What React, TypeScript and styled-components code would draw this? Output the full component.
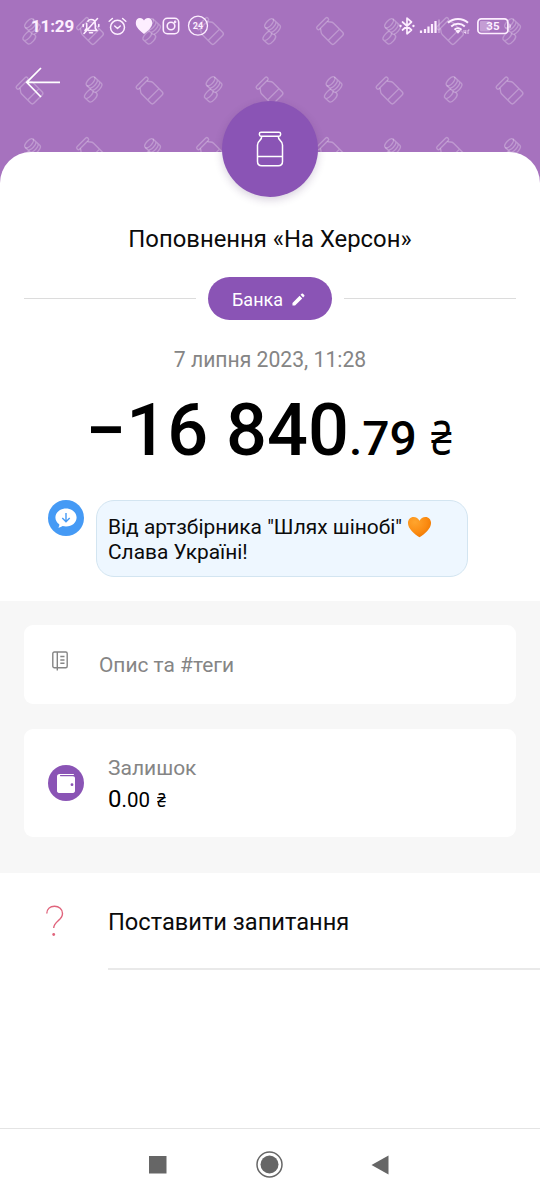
import React from "react";
import styled, { createGlobalStyle } from "styled-components";

const Global = createGlobalStyle`
  *, *::before, *::after { box-sizing: border-box; }
  body { margin: 0; background: #fff; font-family: Roboto, "Noto Sans", sans-serif; color: #0b0b0b; }
  svg { display: block; flex: none; }
`;

const violet = "#8a54b5";
const muted = "#858585";

const Screen = styled.div`
  width: 540px;
  height: 1200px;
  display: flex;
  flex-direction: column;
  background: #fff;
  overflow: hidden;
`;

const Header = styled.header`
  position: relative;
  flex: none;
  height: 190px;
  background: #a672be;
`;

const Backdrop = styled.svg`
  position: absolute;
  inset: 0;
`;

const StatusBar = styled.div`
  position: relative;
  display: flex;
  align-items: center;
  height: 52px;
  padding: 0 28px 0 31px;
  color: #fdeeff;
`;

const Clock = styled.span`
  width: 51px;
  font-size: 17px;
  font-weight: 700;
  line-height: 20px;
  letter-spacing: -0.15px;
`;

const Slot = styled.span<{ $gap?: number }>`
  margin-left: ${(p) => p.$gap ?? 0}px;
`;

const Spacer = styled.span`
  flex: 1;
`;

const BackButton = styled.button`
  position: relative;
  display: block;
  margin: 14px 0 0 25px;
  padding: 0;
  border: 0;
  background: none;
`;

const Sheet = styled.main`
  position: relative;
  flex: 1;
  display: flex;
  flex-direction: column;
  margin-top: -38px;
  border-radius: 31px 31px 0 0;
  background: #fff;
`;

const Avatar = styled.div`
  display: flex;
  align-items: center;
  justify-content: center;
  width: 96px;
  height: 96px;
  margin: -51px auto 0;
  border-radius: 50%;
  background: ${violet};
  box-shadow: 0 3px 8px rgba(60, 30, 90, 0.2);
`;

const Title = styled.h1`
  margin: 27px 0 0;
  font-size: 23.85px;
  font-weight: 400;
  line-height: 30px;
  text-align: center;
`;

const CategoryRow = styled.div`
  display: flex;
  align-items: center;
  gap: 12px;
  margin-top: 23px;
  padding: 0 24px;
`;

const Rule = styled.span`
  flex: 1;
  height: 1px;
  background: #dcdcdc;
`;

const Category = styled.button`
  display: flex;
  align-items: center;
  gap: 9px;
  width: 124px;
  height: 43px;
  padding: 1px 0 0 24px;
  border: 0;
  border-radius: 22px;
  background: ${violet};
  color: #fff;
  font: 400 18px Roboto, sans-serif;
`;

const DateLine = styled.p`
  margin: 27px 0 0;
  color: ${muted};
  font-size: 21.15px;
  line-height: 26px;
  text-align: center;
`;

const Amount = styled.p`
  display: flex;
  align-items: baseline;
  justify-content: center;
  margin: 16px 0 0;
  padding-left: 3px;
  color: #000;
  font-size: 72px;
  font-weight: 500;
  line-height: 84px;
  white-space: pre;
`;

const Cents = styled.span`
  font-size: 48px;
`;

const Currency = styled.span<{ $size: number; $gap: number }>`
  display: inline-block;
  margin-left: ${(p) => p.$gap}px;
  font-size: ${(p) => p.$size}px;
  font-weight: 400;
  transform: scaleX(0.78);
  transform-origin: left;
`;

const Message = styled.div`
  display: flex;
  align-items: flex-start;
  gap: 12px;
  margin-top: 19px;
  padding-left: 48px;
`;

const Bubble = styled.p`
  width: 372px;
  height: 77px;
  margin: 0;
  padding: 14px 11px 12px;
  border: 1px solid #d3e5f1;
  border-radius: 18px;
  background: #eef7ff;
  font-size: 20.9px;
  line-height: 25px;
`;

const Heart = styled.svg`
  display: inline-block;
  vertical-align: -4px;
`;

const Details = styled.section`
  display: flex;
  flex-direction: column;
  gap: 25px;
  height: 272px;
  margin-top: 24px;
  padding: 24px;
  background: #f7f7f7;
`;

const Card = styled.div<{ $height: number }>`
  display: flex;
  align-items: center;
  height: ${(p) => p.$height}px;
  padding-left: 24px;
  border-radius: 9px;
  background: #fff;
`;

const Hint = styled.span`
  margin: 1px 0 0 30px;
  color: ${muted};
  font-size: 20.9px;
`;

const NoteIcon = styled.svg`
  margin: 0 0 8px 4px;
`;

const Balance = styled.div`
  margin-left: 24px;
  padding-top: 2px;
  font-size: 21px;
  line-height: 31px;
`;

const BalanceLabel = styled.div`
  color: ${muted};
`;

const BalanceValue = styled.div`
  color: #000;
  font-size: 24px;
`;

const Small = styled.span`
  font-size: 20.5px;
`;

const Question = styled.div`
  display: flex;
  height: 97px;
  padding-left: 46px;
`;

const QuestionIcon = styled.svg`
  margin-top: 32px;
`;

const QuestionText = styled.div`
  flex: 1;
  margin-left: 44px;
  padding-top: 33px;
  border-bottom: 2px solid #e9e9e9;
  font-size: 23.65px;
  line-height: 32px;
`;

const NavBar = styled.nav`
  flex: none;
  display: flex;
  align-items: center;
  justify-content: space-between;
  height: 72px;
  padding: 0 151px 0 149px;
  border-top: 1px solid #e4e4e4;
`;

const Coins = () => (
  <g transform="rotate(-48) scale(0.95)">
    <ellipse cx="5" cy="-6.5" rx="6" ry="2.8" />
    <path d="M-1-6.5v9.8c0 1.6 2.7 2.8 6 2.8s6-1.2 6-2.8v-9.8M-1-3.2c0 1.6 2.7 2.8 6 2.8s6-1.2 6-2.8M-1 .1c0 1.6 2.7 2.8 6 2.8s6-1.2 6-2.8" />
    <path d="M-1-.8c-1.100-.7-3-1-5-1-3.300 0-6 1.200-6 2.800v5.500c0 1.600 2.700 2.800 6 2.800s6-1.200 6-2.800v-1.500M-12 1c0 1.600 2.700 2.800 6 2.800 2 0 4-.4 5-1.200" />
  </g>
);

const Jar = () => (
  <g transform="rotate(-45) scale(0.95)">
    <rect x="-8" y="-13.500" width="16" height="3.600" rx="1.500" />
    <path d="M-5.500-9.900c0 2.500-3 2.800-3 6V9.500c0 1.500 1 2.500 2.500 2.500H6c1.500 0 2.500-1 2.500-2.500V-3.900c0-3.200-3-3.500-3-6M-8.500 5h17" />
  </g>
);

const Pattern = () => (
  <Backdrop width="540" height="190" aria-hidden="true">
    <defs>
      <pattern id="savings" width="120" height="120" patternUnits="userSpaceOnUse">
        <g fill="none" stroke="#fff" strokeOpacity="0.27" strokeWidth="1.400">
          <g transform="translate(30.500 31)"><Coins /></g>
          <g transform="translate(90.500 31.500)"><Jar /></g>
          <g transform="translate(30 91)"><Jar /></g>
          <g transform="translate(92 89)"><Coins /></g>
        </g>
      </pattern>
    </defs>
    <rect width="540" height="190" fill="url(#savings)" />
  </Backdrop>
);

const line = { fill: "none", stroke: "currentColor", strokeLinecap: "round", strokeLinejoin: "round" } as const;

export default function App() {
  return (
    <Screen>
      <Global />
      <Header>
        <Pattern />
        <StatusBar>
          <Clock>11:29</Clock>
          <Slot>
            <svg width="18" height="18" viewBox="0 0 18 18" {...line} strokeWidth="1.600">
              <path d="M6 4.200C6.700 3 7.700 2.500 9 2.500c2.800 0 4.300 2 4.300 4.500v4.300l1.700 2.200H6.500M4.700 6.500v4.800L3 13.500M2 16.500 15.500 1.500M7.500 15.800h3M1.200 7.500v2M16.800 7.500v2" />
            </svg>
          </Slot>
          <Slot $gap={8}>
            <svg width="19" height="19" viewBox="0 0 19 19" {...line} strokeWidth="1.500">
              <circle cx="9.500" cy="10.300" r="7" />
              <path d="m6.700 9 2.800 2.500L12.300 9M1.200 4.200l3.200-2.700M17.800 4.200l-3.200-2.700" />
            </svg>
          </Slot>
          <Slot $gap={8}>
            <svg width="18" height="18" viewBox="0 0 18 18" fill="currentColor">
              <path d="M9 17C5 13.800.800 10.500.800 6c0-3 1.800-4.900 4.200-4.900 1.800 0 3.200.9 4 2.400.8-1.500 2.200-2.400 4-2.400 2.400 0 4.200 1.900 4.200 4.900 0 4.500-4.200 7.800-8.200 11z" />
            </svg>
          </Slot>
          <Slot $gap={9}>
            <svg width="18" height="18" viewBox="0 0 18 18" {...line} strokeWidth="1.600">
              <rect x="1.300" y="1.300" width="15.400" height="15.400" rx="4" />
              <circle cx="9" cy="9" r="3.800" />
              <circle cx="13.100" cy="4.900" r=".5" />
            </svg>
          </Slot>
          <Slot $gap={7}>
            <svg width="22" height="22" viewBox="0 0 22 22">
              <circle cx="11" cy="10.700" r="9.500" {...line} strokeWidth="1.300" />
              <text x="11" y="13.900" textAnchor="middle" fontSize="9" fontWeight="700" fill="currentColor">24</text>
            </svg>
          </Slot>
          <Spacer />
          <Slot>
            <svg width="16" height="18" viewBox="0 0 16 18" {...line} strokeWidth="1.700">
              <path d="m3.500 5 9 8L8 16.800V1.200L12.500 5l-9 8" />
              <path d="M1.500 9h.1M14.400 9h.1" strokeWidth="2.300" />
            </svg>
          </Slot>
          <Slot $gap={4}>
            <svg width="21" height="16" viewBox="0 0 21 16" fill="none" stroke="currentColor" strokeWidth="2.200">
              <path d="M2 15v-2.500M6 15v-4M9.500 15V8.500M13 15V6M16.500 15V3" />
              <path d="M20 15V1.500" opacity="0.300" />
            </svg>
          </Slot>
          <Slot $gap={7}>
            <svg width="23" height="18" viewBox="0 0 23 18" {...line} strokeWidth="2" strokeLinecap="butt">
              <path d="M1 5.800c5.500-5.100 14.500-5.100 20 0M4.200 9.500c3.900-3.600 9.700-3.600 13.600 0M7.500 12.700c2-1.900 5-1.900 7 0" />
              <path d="m8.300 13.800 2.700 3 2.700-3c-1.500-1.300-3.900-1.300-5.400 0z" fill="currentColor" stroke="none" />
              <path d="M17 13v2.500h2M18.800 13v4M21 17v-4h1.500" strokeWidth=".7" />
            </svg>
          </Slot>
          <Slot $gap={6}>
            <svg width="36" height="18" viewBox="0 0 36 18">
              <rect x="1.900" y="1.900" width="30" height="14.600" rx="3.500" {...line} strokeWidth="1.700" />
              <rect x="4" y="4" width="10" height="10.400" rx="1" fill="currentColor" opacity="0.350" />
              <path d="M33.500 6.500c1.500.3 1.500 5 0 5.300z" fill="currentColor" />
              <text x="17" y="13.300" textAnchor="middle" fontSize="11.500" fontWeight="700" letterSpacing=".2" fill="currentColor">35</text>
            </svg>
          </Slot>
        </StatusBar>
        <BackButton aria-label="Назад">
          <svg width="36" height="34" viewBox="0 0 36 34" fill="none" stroke="#fff" strokeWidth="1.700">
            <path d="M35 16.300H1.500M16 2 1.700 16.300 16 31" />
          </svg>
        </BackButton>
      </Header>

      <Sheet>
        <Avatar>
          <svg width="28" height="36" viewBox="0 0 28 36" fill="none" stroke="#fff" strokeWidth="1.500">
            <rect x="3.400" y="1.200" width="21.200" height="4" rx="1.600" />
            <path d="M5.700 5.200c.3 5-4.200 3.700-4.200 8.800v16.500c0 2.500 1.700 4.200 4.200 4.200h16.600c2.500 0 4.200-1.700 4.200-4.200V14c0-5.100-4.500-3.800-4.200-8.800M1.500 25.500h25" />
          </svg>
        </Avatar>
        <Title>Поповнення «На Херсон»</Title>
        <CategoryRow>
          <Rule />
          <Category>
            Банка
            <svg width="13" height="13" viewBox="0 0 14 14" fill="#fff">
              <path d="M.5 10.700 8.200 3l2.800 2.800-7.700 7.700H.5zM9.200 2l1.200-1.200c.4-.4 1-.4 1.400 0l1.400 1.400c.4.4.4 1 0 1.400L12 4.800z" />
            </svg>
          </Category>
          <Rule />
        </CategoryRow>
        <DateLine>7 липня 2023, 11:28</DateLine>
        <Amount>
          −16 840<Cents>.79</Cents><Currency $size={48} $gap={14}>₴</Currency>
        </Amount>
        <Message>
          <svg width="36" height="36" viewBox="0 0 36 36">
            <circle cx="18" cy="18" r="18" fill="#459af5" />
            <path d="M18 8.500c6 0 10.600 4 10.600 9S24 26.500 18 26.500c-1.300 0-2.300-.1-3.400-.4-1 .9-2.500 1.500-4.400 1.500 1-1 1.300-2.200 1-3.300-2.300-1.600-3.800-4-3.800-6.800C7.400 12.500 12 8.500 18 8.500z" fill="#fff" />
            <path d="M18 13v8.500M14.300 18l3.700 3.700 3.700-3.700" fill="none" stroke="#459af5" strokeWidth="1.400" />
          </svg>
          <Bubble>
            Від артзбірника "Шлях шінобі"{" "}
            <Heart width="25" height="22" viewBox="0 0 26 22" role="img" aria-label="серце">
              <defs>
                <radialGradient id="heart" cx="0.300" cy="0.250" r="0.850">
                  <stop offset="0" stopColor="#ffa52e" />
                  <stop offset="0.600" stopColor="#fb8c12" />
                  <stop offset="1" stopColor="#ee7500" />
                </radialGradient>
              </defs>
              <path d="M13 21.700C7.500 18 1 12.700 1 6.800 1 3.200 3.500.5 6.800.5c2.700 0 5 1.500 6.200 4 1.200-2.500 3.500-4 6.200-4C22.500.5 25 3.200 25 6.800c0 5.900-6.500 11.200-12 14.900z" fill="url(#heart)" />
            </Heart>
            <br />
            Слава Україні!
          </Bubble>
        </Message>

        <Details>
          <Card $height={79}>
            <NoteIcon width="17" height="20" viewBox="0 0 17 20" fill="none" stroke="#858585" strokeWidth="1.400">
              <rect x=".8" y="1" width="14.400" height="15.800" rx="1.500" />
              <path d="M5.300 1v18.500M8.300 5.500h4.200M8.300 9h4.200M8.300 12.300h4.200" />
            </NoteIcon>
            <Hint>Опис та #теги</Hint>
          </Card>
          <Card $height={108}>
            <svg width="36" height="36" viewBox="0 0 36 36">
              <circle cx="18" cy="18" r="18" fill={violet} />
              <path d="M11.500 9H25c.7 0 1 .4 1 1H12.500c-.8 0-.8 1.200 0 1.200H25c1.300 0 2 .8 2 2v12.600c0 1.300-.8 2.200-2 2.200H11c-1.300 0-2-.9-2-2.200V11.500C9 10 10 9 11.500 9z" fill="#fff" />
              <circle cx="24" cy="19.700" r="1.400" fill={violet} />
            </svg>
            <Balance>
              <BalanceLabel>Залишок</BalanceLabel>
              <BalanceValue>
                0<Small>.00</Small><Currency $size={20.5} $gap={7}>₴</Currency>
              </BalanceValue>
            </Balance>
          </Card>
        </Details>

        <Question>
          <QuestionIcon width="18" height="32" viewBox="0 0 18 32" fill="none" stroke="#e0647c" strokeWidth="1.400">
            <path d="M.8 8.500C.8 4 4 1.200 8.500 1.200s8 2.900 8 7.200c0 3.600-2 5.300-4.300 7.300-2.500 2.200-4.500 4-4.500 7.300" />
            <circle cx="7.700" cy="29.500" r="1.400" fill="#e0647c" stroke="none" />
          </QuestionIcon>
          <QuestionText>Поставити запитання</QuestionText>
        </Question>
      </Sheet>

      <NavBar>
        <svg width="18" height="18" viewBox="0 0 18 18"><rect width="17.500" height="17.500" fill="#666" /></svg>
        <svg width="27" height="27" viewBox="0 0 27 27">
          <circle cx="13.500" cy="13.500" r="12.500" fill="none" stroke="#666" strokeWidth="1.500" />
          <circle cx="13.500" cy="13.500" r="9" fill="#666" />
        </svg>
        <svg width="18" height="20" viewBox="0 0 18 20"><path d="M17.500.500v19L.500 10z" fill="#666" /></svg>
      </NavBar>
    </Screen>
  );
}
